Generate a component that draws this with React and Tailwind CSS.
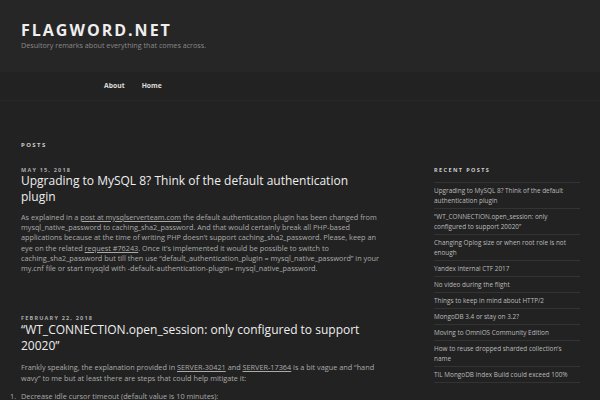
import React from 'react';

const recent = [
  'Upgrading to MySQL 8? Think of the default authentication plugin',
  '“WT_CONNECTION.open_session: only configured to support 20020”',
  'Changing Oplog size or when root role is not enough',
  'Yandex internal CTF 2017',
  'No video during the flight',
  'Things to keep in mind about HTTP/2',
  'MongoDB 3.4 or stay on 3.2?',
  'Moving to OmniOS Community Edition',
  'How to reuse dropped sharded collection’s name',
  'TIL MongoDB Index Build could exceed 100%',
];

const Meta = ({ children }) => (
  <div className="text-[5.5px] font-bold tracking-[1.2px] uppercase text-[#aaa] leading-[8px]">{children}</div>
);

const App = () => {
  return (
    <div className="w-[600px] h-[400px] overflow-hidden bg-[#222] text-[#ccc]" style={{ fontFamily: '"Open Sans", "DejaVu Sans", sans-serif' }}>
      {/* header */}
      <header className="h-[72px] bg-[#262626] px-[21px] pt-[21px]">
        <h1 className="text-[16px] font-bold tracking-[2px] text-[#eee] leading-[18px]">FLAGWORD.NET</h1>
        <p className="text-[7.2px] text-[#888] leading-[12px]">Desultory remarks about everything that comes across.</p>
      </header>

      {/* nav */}
      <nav className="h-[29px] bg-[#222] border-b border-[#292929] flex items-center pl-[104px] gap-[17px] text-[6.8px] font-bold text-[#ddd]">
        <a>About</a>
        <a>Home</a>
      </nav>

      <div className="flex pl-[21px]">
        {/* posts */}
        <main className="w-[362px] pt-[40px]">
          <div className="text-[6px] font-bold tracking-[1.4px] text-[#ccc] leading-[8px]">POSTS</div>

          <article className="mt-[17px]">
            <Meta>May 15, 2018</Meta>
            <h2 className="text-[12px] leading-[16px] text-[#eee] -mt-[1px]">Upgrading to MySQL 8? Think of the default authentication plugin</h2>
            <p className="text-[7.3px] leading-[10.2px] text-[#aaa] mt-[7px]">
              As explained in a <a className="underline">post at mysqlserverteam.com</a> the default authentication plugin has been changed from mysql_native_password to caching_sha2_password. And that would certainly break all PHP-based applications because at the time of writing PHP doesn’t support caching_sha2_password. Please, keep an eye on the related <a className="underline">request #76243</a>. Once it’s implemented it would be possible to switch to caching_sha2_password but till then use “default_authentication_plugin = mysql_native_password” in your my.cnf file or start mysqld with -default-authentication-plugin= mysql_native_password.
            </p>
          </article>

          <article className="mt-[41px]">
            <Meta>February 22, 2018</Meta>
            <h2 className="text-[12px] leading-[16px] text-[#eee] mt-0">“WT_CONNECTION.open_session: only configured to support 20020”</h2>
            <p className="text-[7.3px] leading-[10.6px] text-[#aaa] mt-[8px]">
              Frankly speaking, the explanation provided in <a className="underline">SERVER-30421</a> and <a className="underline">SERVER-17364</a> is a bit vague and “hand wavy” to me but at least there are steps that could help mitigate it:
            </p>
            <ol className="mt-[8px] text-[7.3px] leading-[10px] text-[#aaa]">
              <li className="flex"><span className="w-0 -ml-[11px] mr-[11px]">1.</span>Decrease idle cursor timeout (default value is 10 minutes):</li>
            </ol>
          </article>
        </main>

        {/* sidebar */}
        <aside className="ml-[51px] w-[146px] pt-[65px]">
          <div className="text-[5.5px] font-bold tracking-[1.4px] text-[#ccc] leading-[8px]">RECENT POSTS</div>
          <ul className="mt-[8px] border-t border-[#333]">
            {recent.map((t) => (
              <li key={t} className="border-b border-[#333] py-[2.5px] pr-[4px] text-[6.4px] leading-[10px] text-[#bbb]">{t}</li>
            ))}
          </ul>
          <div className="mt-[19px] text-[5.5px] font-bold tracking-[1.4px] text-[#ccc] leading-[8px]">RECENT COMMENTS</div>
        </aside>
      </div>
    </div>
  );
};

export default App;
